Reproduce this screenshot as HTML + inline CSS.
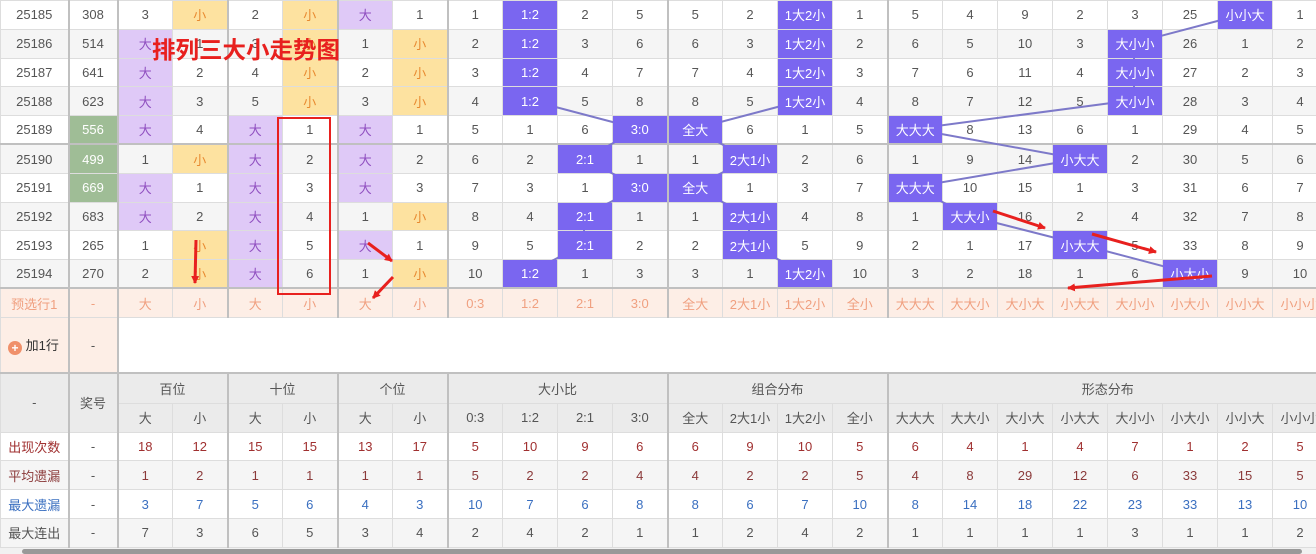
<!DOCTYPE html>
<html><head><meta charset="utf-8">
<style>
*{margin:0;padding:0;box-sizing:border-box}
body{width:1316px;height:554px;overflow:hidden;background:#fff;font-family:"Liberation Sans","Noto Sans CJK SC",sans-serif;font-size:13px;color:#555;position:relative}
table{border-collapse:collapse;table-layout:fixed;position:absolute;left:0;top:0;width:1327px}
td{border:1px solid #ddd;text-align:center;height:28.8px;white-space:nowrap;overflow:hidden;padding:0;background:#fff}
tr.s td{background:#f5f5f5}
td.L{border-left:2px solid #c0c0c0}
td.p{background:#dfc9f7!important;color:#9050c0}
td.y{background:#fde2a0!important;color:#e88a30}
td.b{background:#7a66f0!important;color:#fff;position:relative;z-index:3}
td.g{background:#9fbd96!important;color:#fff}
tr.T td{border-top:2px solid #c0c0c0}
tr.pre td{background:#fdeee6;color:#f0a080;border-top:2px solid #c0c0c0}
tr.h td{background:#ebebeb;color:#555}
.r1 td{color:#a03030}.r2 td{color:#8b3a3a}.r3 td{color:#3a6fc0}
svg{position:absolute;left:0;top:0;z-index:2}
.title{position:absolute;left:152px;top:31px;color:#e8201e;font-weight:bold;font-size:23.5px;z-index:5;font-family:"Liberation Sans","Noto Sans CJK SC",sans-serif}
.box{position:absolute;left:277px;top:117px;width:54px;height:178px;border:2px solid #e8201e;z-index:5}
</style></head><body>
<table>
<colgroup><col style="width:68px"><col style="width:49px"><col span="22" style="width:55px"></colgroup>
<tr><td>25185</td><td class="L">308</td><td class="L">3</td><td class="y">小</td><td class="L">2</td><td class="y">小</td><td class="L p">大</td><td>1</td><td class="L">1</td><td class="b">1:2</td><td>2</td><td>5</td><td class="L">5</td><td>2</td><td class="b">1大2小</td><td>1</td><td class="L">5</td><td>4</td><td>9</td><td>2</td><td>3</td><td>25</td><td class="b">小小大</td><td>1</td></tr>
<tr class="s"><td>25186</td><td class="L">514</td><td class="L p">大</td><td>1</td><td class="L">3</td><td class="y">小</td><td class="L">1</td><td class="y">小</td><td class="L">2</td><td class="b">1:2</td><td>3</td><td>6</td><td class="L">6</td><td>3</td><td class="b">1大2小</td><td>2</td><td class="L">6</td><td>5</td><td>10</td><td>3</td><td class="b">大小小</td><td>26</td><td>1</td><td>2</td></tr>
<tr><td>25187</td><td class="L">641</td><td class="L p">大</td><td>2</td><td class="L">4</td><td class="y">小</td><td class="L">2</td><td class="y">小</td><td class="L">3</td><td class="b">1:2</td><td>4</td><td>7</td><td class="L">7</td><td>4</td><td class="b">1大2小</td><td>3</td><td class="L">7</td><td>6</td><td>11</td><td>4</td><td class="b">大小小</td><td>27</td><td>2</td><td>3</td></tr>
<tr class="s"><td>25188</td><td class="L">623</td><td class="L p">大</td><td>3</td><td class="L">5</td><td class="y">小</td><td class="L">3</td><td class="y">小</td><td class="L">4</td><td class="b">1:2</td><td>5</td><td>8</td><td class="L">8</td><td>5</td><td class="b">1大2小</td><td>4</td><td class="L">8</td><td>7</td><td>12</td><td>5</td><td class="b">大小小</td><td>28</td><td>3</td><td>4</td></tr>
<tr><td>25189</td><td class="L g">556</td><td class="L p">大</td><td>4</td><td class="L p">大</td><td>1</td><td class="L p">大</td><td>1</td><td class="L">5</td><td>1</td><td>6</td><td class="b">3:0</td><td class="L b">全大</td><td>6</td><td>1</td><td>5</td><td class="L b">大大大</td><td>8</td><td>13</td><td>6</td><td>1</td><td>29</td><td>4</td><td>5</td></tr>
<tr class="s T"><td>25190</td><td class="L g">499</td><td class="L">1</td><td class="y">小</td><td class="L p">大</td><td>2</td><td class="L p">大</td><td>2</td><td class="L">6</td><td>2</td><td class="b">2:1</td><td>1</td><td class="L">1</td><td class="b">2大1小</td><td>2</td><td>6</td><td class="L">1</td><td>9</td><td>14</td><td class="b">小大大</td><td>2</td><td>30</td><td>5</td><td>6</td></tr>
<tr><td>25191</td><td class="L g">669</td><td class="L p">大</td><td>1</td><td class="L p">大</td><td>3</td><td class="L p">大</td><td>3</td><td class="L">7</td><td>3</td><td>1</td><td class="b">3:0</td><td class="L b">全大</td><td>1</td><td>3</td><td>7</td><td class="L b">大大大</td><td>10</td><td>15</td><td>1</td><td>3</td><td>31</td><td>6</td><td>7</td></tr>
<tr class="s"><td>25192</td><td class="L">683</td><td class="L p">大</td><td>2</td><td class="L p">大</td><td>4</td><td class="L">1</td><td class="y">小</td><td class="L">8</td><td>4</td><td class="b">2:1</td><td>1</td><td class="L">1</td><td class="b">2大1小</td><td>4</td><td>8</td><td class="L">1</td><td class="b">大大小</td><td>16</td><td>2</td><td>4</td><td>32</td><td>7</td><td>8</td></tr>
<tr><td>25193</td><td class="L">265</td><td class="L">1</td><td class="y">小</td><td class="L p">大</td><td>5</td><td class="L p">大</td><td>1</td><td class="L">9</td><td>5</td><td class="b">2:1</td><td>2</td><td class="L">2</td><td class="b">2大1小</td><td>5</td><td>9</td><td class="L">2</td><td>1</td><td>17</td><td class="b">小大大</td><td>5</td><td>33</td><td>8</td><td>9</td></tr>
<tr class="s"><td>25194</td><td class="L">270</td><td class="L">2</td><td class="y">小</td><td class="L p">大</td><td>6</td><td class="L">1</td><td class="y">小</td><td class="L">10</td><td class="b">1:2</td><td>1</td><td>3</td><td class="L">3</td><td>1</td><td class="b">1大2小</td><td>10</td><td class="L">3</td><td>2</td><td>18</td><td>1</td><td>6</td><td class="b">小大小</td><td>9</td><td>10</td></tr>
<tr class="pre"><td>预选行1</td><td class="L">-</td><td class="L">大</td><td>小</td><td class="L">大</td><td>小</td><td class="L">大</td><td>小</td><td class="L">0:3</td><td>1:2</td><td>2:1</td><td>3:0</td><td class="L">全大</td><td>2大1小</td><td>1大2小</td><td>全小</td><td class="L">大大大</td><td>大大小</td><td>大小大</td><td>小大大</td><td>大小小</td><td>小大小</td><td>小小大</td><td>小小小</td></tr>
<tr><td style="height:56px;background:#fdeee6;color:#333;text-align:left;padding-left:7px"><span style="display:inline-block;width:14px;height:14px;border-radius:7px;background:#f0906a;color:#fff;font-size:12px;line-height:14px;text-align:center;vertical-align:-2px;font-weight:bold">+</span> 加1行</td><td class="L" style="background:#fdeee6">-</td><td class="L" colspan="22" style="border-right:none"></td></tr>
<tr class="h" style="border-top:2px solid #c0c0c0"><td rowspan="2">-</td><td class="L" rowspan="2">奖号</td><td class="L" colspan="2" style="height:30px">百位</td><td class="L" colspan="2">十位</td><td class="L" colspan="2">个位</td><td class="L" colspan="4">大小比</td><td class="L" colspan="4">组合分布</td><td class="L" colspan="8">形态分布</td></tr>
<tr class="h"><td class="L">大</td><td>小</td><td class="L">大</td><td>小</td><td class="L">大</td><td>小</td><td class="L">0:3</td><td>1:2</td><td>2:1</td><td>3:0</td><td class="L">全大</td><td>2大1小</td><td>1大2小</td><td>全小</td><td class="L">大大大</td><td>大大小</td><td>大小大</td><td>小大大</td><td>大小小</td><td>小大小</td><td>小小大</td><td>小小小</td></tr>
<tr class="r1"><td>出现次数</td><td class="L" style="color:#555">-</td><td class="L">18</td><td>12</td><td class="L">15</td><td>15</td><td class="L">13</td><td>17</td><td class="L">5</td><td>10</td><td>9</td><td>6</td><td class="L">6</td><td>9</td><td>10</td><td>5</td><td class="L">6</td><td>4</td><td>1</td><td>4</td><td>7</td><td>1</td><td>2</td><td>5</td></tr>
<tr class="s r2"><td>平均遗漏</td><td class="L" style="color:#555">-</td><td class="L">1</td><td>2</td><td class="L">1</td><td>1</td><td class="L">1</td><td>1</td><td class="L">5</td><td>2</td><td>2</td><td>4</td><td class="L">4</td><td>2</td><td>2</td><td>5</td><td class="L">4</td><td>8</td><td>29</td><td>12</td><td>6</td><td>33</td><td>15</td><td>5</td></tr>
<tr class="r3"><td>最大遗漏</td><td class="L" style="color:#555">-</td><td class="L">3</td><td>7</td><td class="L">5</td><td>6</td><td class="L">4</td><td>3</td><td class="L">10</td><td>7</td><td>6</td><td>8</td><td class="L">8</td><td>6</td><td>7</td><td>10</td><td class="L">8</td><td>14</td><td>18</td><td>22</td><td>23</td><td>33</td><td>13</td><td>10</td></tr>
<tr class="s"><td>最大连出</td><td class="L">-</td><td class="L">7</td><td>3</td><td class="L">6</td><td>5</td><td class="L">3</td><td>4</td><td class="L">2</td><td>4</td><td>2</td><td>1</td><td class="L">1</td><td>2</td><td>4</td><td>2</td><td class="L">1</td><td>1</td><td>1</td><td>1</td><td>3</td><td>1</td><td>1</td><td>2</td></tr>
</table>
<svg width="1316" height="554" viewBox="0 0 1316 554">
<g stroke="#7d79c9" stroke-width="2" fill="none">
<polyline points="529,100 639,129 584,159 639,187 584,216 584,244 529,273"/>
<polyline points="804,100 694,129 749,159 694,187 749,216 749,244 804,273"/>
<polyline points="1244,14 1134,43 1134,100 914,129 1079,159 914,187 969,216 1079,244 1189,273"/>
</g>
</svg>
<svg width="1316" height="554" viewBox="0 0 1316 554" style="z-index:6">
<defs><marker id="a" markerWidth="8" markerHeight="8" refX="7" refY="4" orient="auto" markerUnits="userSpaceOnUse"><path d="M0,0 L8,4 L0,8 z" fill="#e8201e"/></marker></defs>
<g stroke="#e8201e" stroke-width="3" fill="none" marker-end="url(#a)">
<line x1="196" y1="240" x2="195" y2="283"/>
<line x1="368" y1="243" x2="392" y2="261"/>
<line x1="393" y1="277" x2="373" y2="298"/>
<line x1="993" y1="211" x2="1045" y2="228"/>
<line x1="1092" y1="234" x2="1156" y2="252"/>
<line x1="1212" y1="276" x2="1068" y2="288"/>
</g>
</svg>
<div class="title">排列三大小走势图</div>
<div class="box"></div>
<div style="position:absolute;left:0;top:548px;width:1316px;height:6px;background:#f1f1f1;z-index:7"><div style="position:absolute;left:22px;top:1px;width:1280px;height:5px;background:#999;border-radius:3px"></div></div>
</body></html>
